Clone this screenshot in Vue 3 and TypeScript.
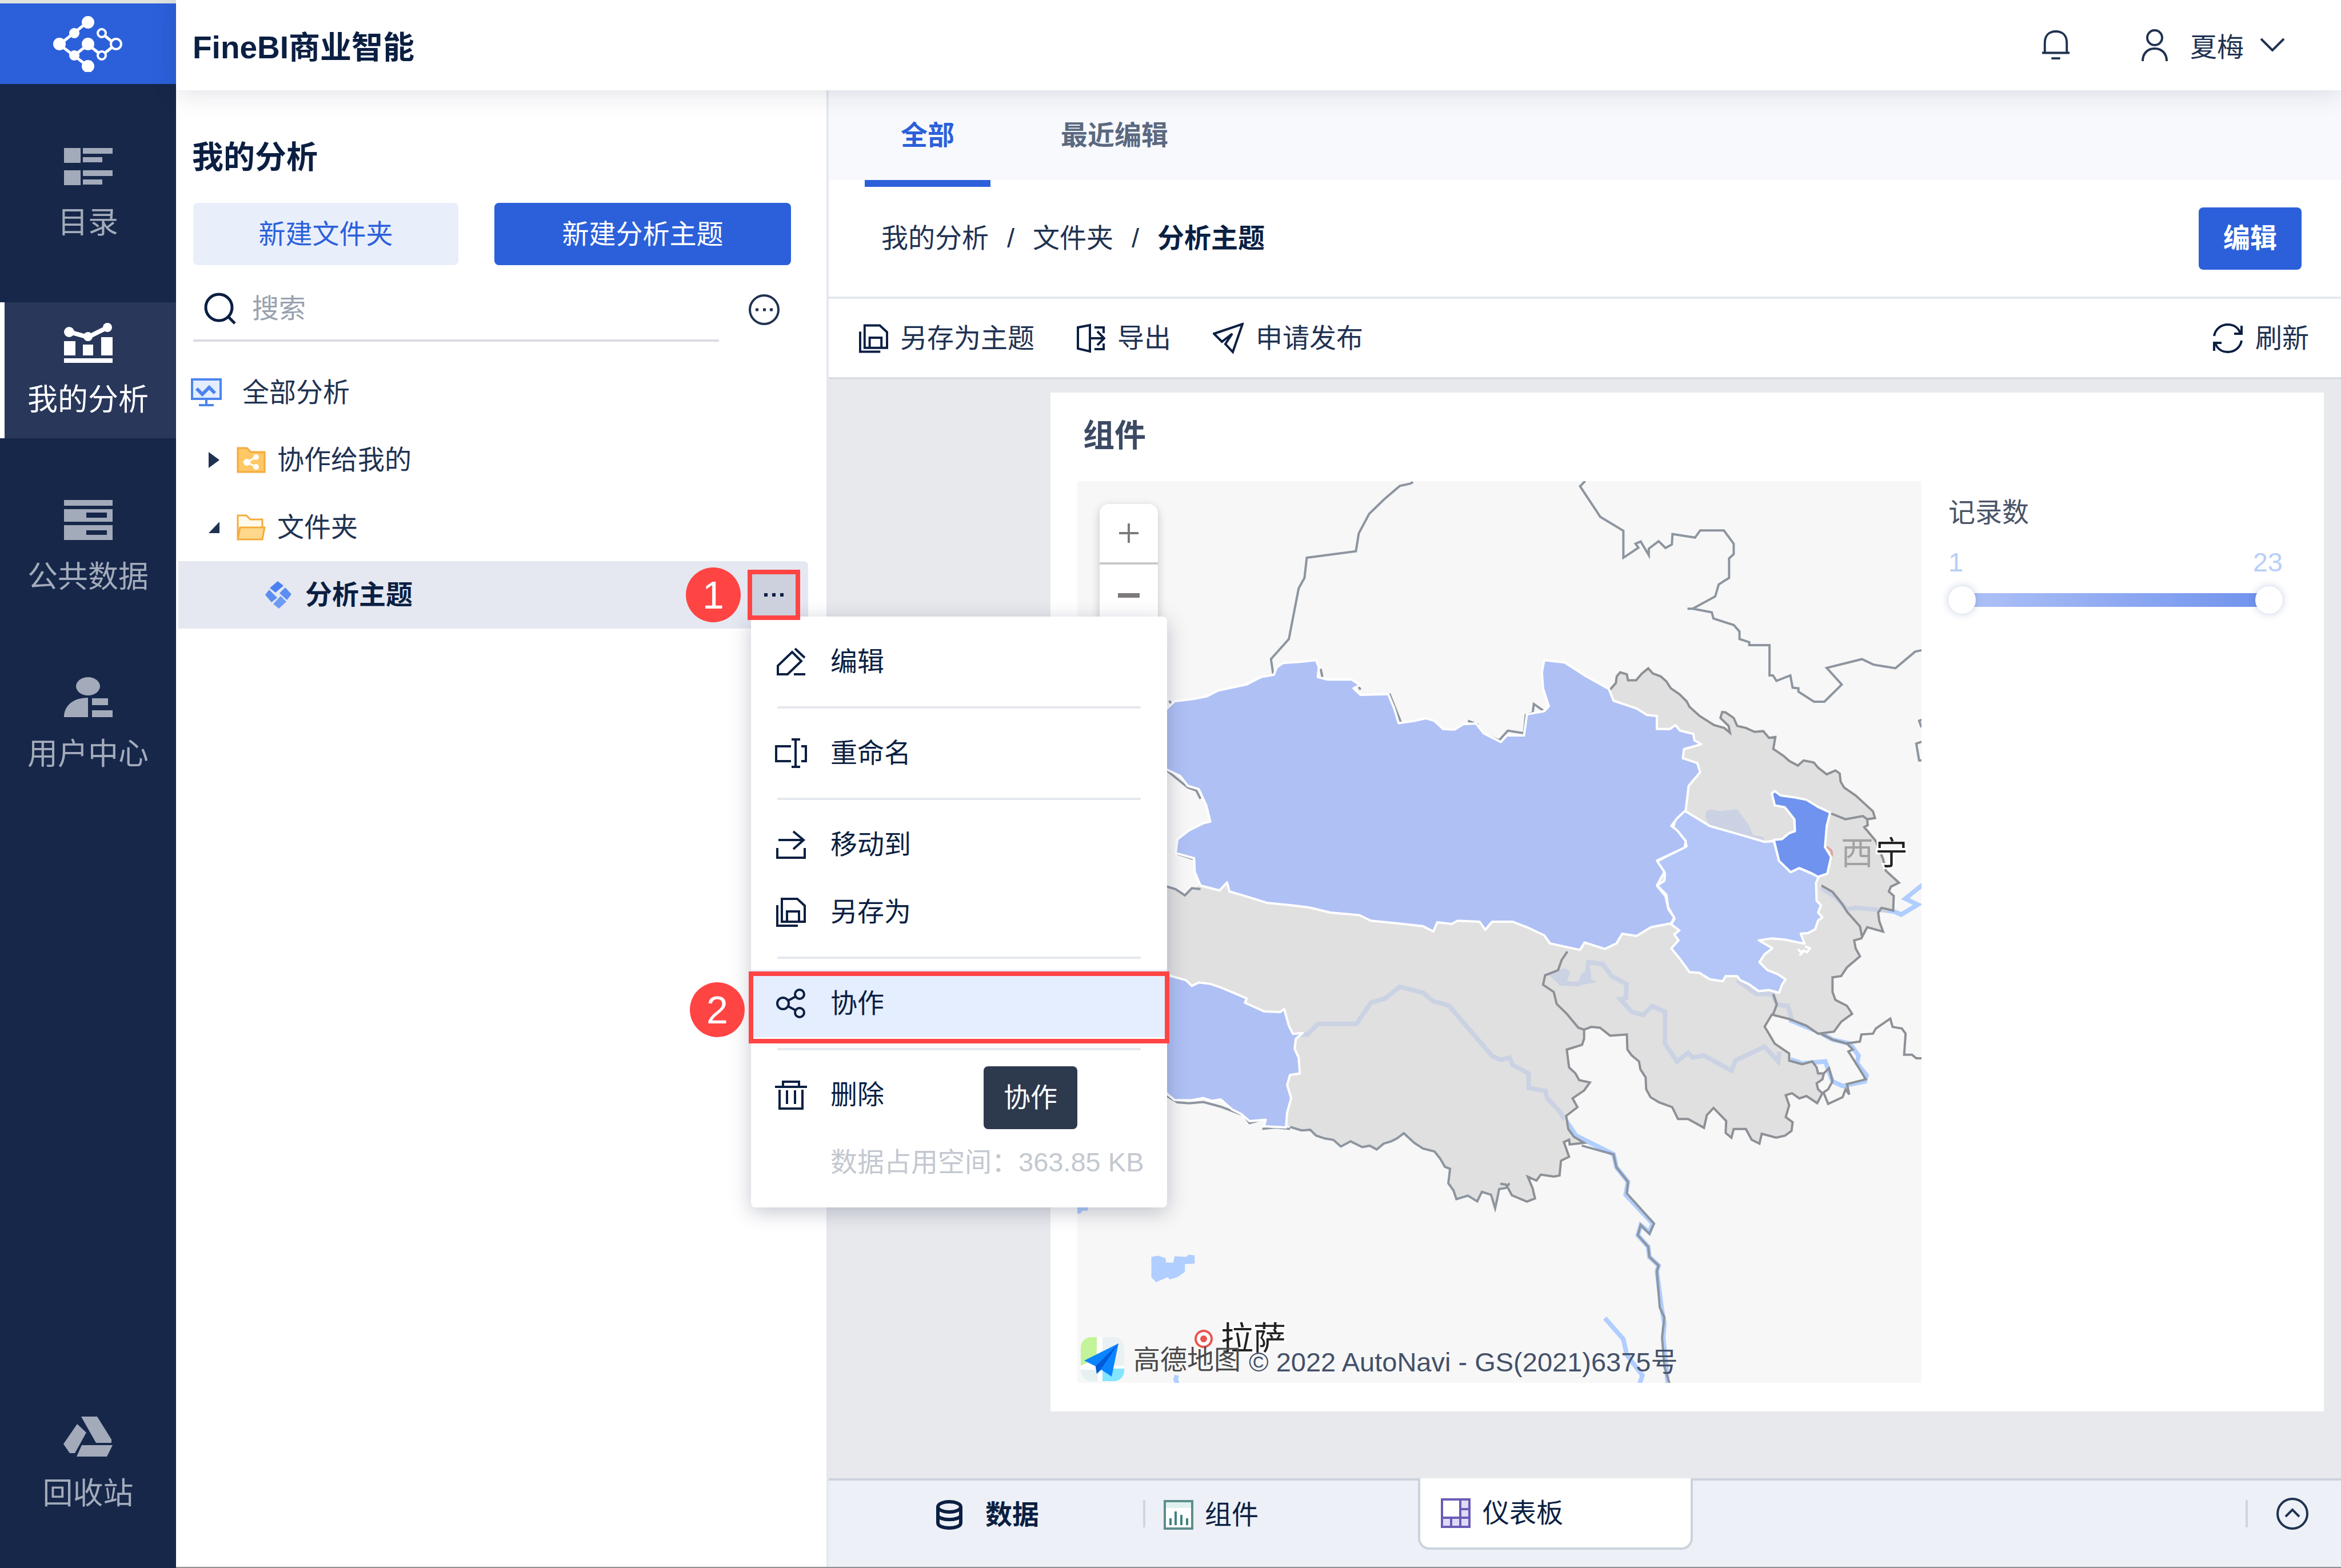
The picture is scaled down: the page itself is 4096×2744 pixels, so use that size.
<script setup lang="ts">
import { ref } from 'vue'

interface NavItem {
  id: string
  label: string
}

const navItems: NavItem[] = [
  { id: 'catalog', label: '目录' },
  { id: 'analysis', label: '我的分析' },
  { id: 'data', label: '公共数据' },
  { id: 'users', label: '用户中心' },
]

const activeNav = ref('analysis')
const activeTab = ref('all')
const keyword = ref('')
const rangeLow = ref(1)
const rangeHigh = ref(23)

/* Province rim, eastern part, clockwise from the north */
const eastRim =
  'M378 170 L400 152 L403 135 L415 125 L438 130 L442 145 L470 145 L490 128 L512 115 L528 128 L555 135 L575 148 L590 165 L620 180 L645 198 L655 212 L690 235 L740 258 L775 265 L795 277 L790 260 L762 240 L768 225 L780 226 L808 240 L820 260 L850 265 L880 275 L910 273 L930 290 L952 288 L945 318 L980 335 L1000 348 L1030 360 L1050 347 L1085 352 L1100 365 L1130 382 L1160 372 L1175 380 L1178 400 L1190 415 L1230 435 L1260 455 L1290 475 L1297 492 L1270 495 L1272 510 L1260 515 L1300 550 L1325 595 L1335 625 L1380 655 L1352 665 L1345 677 L1362 688 L1360 725 L1320 718 L1308 730 L1312 752 L1325 778 L1270 767 L1250 795 L1225 800 L1230 820 L1245 840 L1200 868 L1180 890 L1150 893 L1150 930 L1160 950 L1200 965 L1218 985 L1180 1005 L1155 1030 L1100 1035 L1060 1015 L1000 998 L940 987 L915 1017 L950 1060 L1000 1085 L1000 1103 L1045 1112 L1080 1105 L1095 1120 L1100 1135 L1120 1135 L1115 1150 L1095 1160 L1100 1175 L1115 1185 L1097 1210 L1060 1192 L1035 1198 L1010 1185 L988 1190 L1000 1215 L988 1245 L1012 1258 L1008 1280 L985 1292 L955 1297 L905 1287 L897 1312 L870 1302 L850 1275 L808 1275 L800 1297 L780 1285 L782 1255 L738 1222 L715 1240 L705 1272 L650 1250 L615 1250 L595 1220 L550 1208 L520 1195 L505 1175 L503 1145 L485 1125 L480 1105 L455 1090 L440 1075 L438 1037 L380 1040 L345 1020 L315 1018 L290 1025 L290 1048 L283 1063 L230 1075 L238 1120 L260 1135 L273 1152 L310 1158 L290 1178 L250 1198 L267 1220 L228 1242 L235 1275 L255 1295 L290 1310 L240 1314 L238 1302 L220 1308 L238 1345 L210 1355 L205 1392 L185 1395 L140 1390 L125 1405 L95 1395 L112 1425 L120 1450 L92 1458 L40 1442 L20 1415 L0 1413'

/* Province rim, south-western part, from east to west */
const westRim =
  'M800 765 L793 782 L782 785 L778 825 L775 852 L768 805 L752 795 L744 828 L728 808 L708 820 L703 790 L694 765 L697 715 L688 708 L680 680 L670 655 L650 645 L635 625 L617 592 L605 610 L595 620 L582 628 L570 648 L558 635 L545 640 L525 620 L508 638 L495 615 L480 610 L465 600 L455 580 L440 582 L420 570'

const northLines = [
  'M633 55 L628 60 L610 67 L583 108 L557 153 L539 213 L534 268 L449 288 L445 350 L435 382 L418 538 L387 600 L391 648',
  'M931 52 L922 68 L957 162 L997 205 L997 288 L1023 257 L1018 245 L1027 238 L1041 280 L1041 260 L1058 237 L1070 258 L1081 247 L1082 215 L1121 226 L1130 204 L1171 204 L1188 245 L1188 277 L1180 290 L1180 350 L1162 370 L1156 407 L1117 445 L1108 445 M1117 445 L1150 456 L1153 475 L1188 495 L1198 515 L1198 538 L1215 548 L1215 557 L1250 557 L1250 650 L1256 650 L1262 667 L1286 650 L1290 688 L1300 690 L1300 700 L1327 731 L1345 731 L1375 678 L1349 627 L1410 600 L1430 617 L1468 628 L1502 577 L1515 572',
  'M1515 786 L1509 790 L1513 810 M1515 853 L1504 860 L1509 912 L1515 912',
]

const northWest =
  'M190 775 L207 752 L220 730 L255 722 L275 715 L295 697 L345 678 L370 655 L392 648 L397 625 L408 612 L440 608 L465 603 L470 625 L468 655 L485 663 L527 663 L541 680 L530 690 L542 710 L590 708 L600 750 L608 797 L635 790 L655 782 L670 790 L685 815 L705 817 L720 800 L742 798 L755 828 L785 855 L795 835 L825 835 L830 770 L860 760 L868 745 L858 690 L856 640 L860 603 L895 610 L930 650 L972 692 L980 728 L1020 752 L1038 772 L1055 775 L1055 815 L1078 815 L1087 803 L1095 820 L1118 830 L1120 850 L1132 862 L1102 877 L1100 905 L1125 920 L1130 948 L1110 990 L1105 1065 L1090 1090 L1080 1113 L1090 1127 L1105 1160 L1103 1180 L1055 1220 L1068 1255 L1055 1297 L1070 1330 L1075 1370 L1085 1395 L1080 1413 L1045 1425 L1020 1452 L995 1445 L985 1475 L965 1492 L930 1472 L922 1495 L870 1475 L860 1450 L830 1425 L805 1408 L770 1408 L758 1433 L748 1408 L710 1405 L700 1415 L675 1410 L668 1438 L650 1422 L600 1412 L560 1405 L540 1388 L490 1380 L455 1365 L425 1358 L380 1350 L340 1328 L315 1315 L311 1287 L298 1312 L265 1297 L255 1255 L254 1213 L222 1197 L225 1155 L245 1127 L270 1105 L282 1100 L275 1050 L262 1000 L243 990 L230 960 L207 940 L190 930 Z'

const centre =
  'M635 472 L610 485 L600 512 L585 512 L610 530 L640 548 L645 563 L540 602 L570 632 L568 650 L543 662 L575 685 L580 715 L603 745 L592 760 L620 775 L602 785 L617 800 L592 820 L625 850 L655 880 L690 882 L725 898 L770 903 L780 890 L820 890 L830 900 L860 910 L895 928 L930 925 L965 932 L975 912 L987 898 L960 885 L925 875 L897 855 L915 835 L942 820 L895 800 L940 795 L985 798 L1030 805 L1053 808 L1040 783 L1065 782 L1090 772 L1100 750 L1115 742 L1100 730 L1110 712 L1095 700 L1093 655 L1102 640 L1035 618 L1005 628 L965 600 L947 550 L915 552 L850 538 L725 512 Z'

const hotspot =
  'M940 430 L950 424 L970 435 L1020 440 L1060 446 L1100 464 L1142 478 L1130 512 L1124 565 L1145 590 L1132 632 L1100 640 L1075 630 L1035 618 L1005 628 L965 600 L947 547 L975 545 L1000 530 L1020 525 L1018 495 L985 465 L950 460 Z'

const southWest =
  'M190 30 L215 48 L240 62 L250 82 L262 70 L280 74 L300 87 L325 108 L345 125 L342 140 L375 170 L403 172 L410 162 L418 220 L425 248 L442 245 L430 265 L428 300 L435 330 L437 385 L420 390 L415 425 L422 470 L415 520 L413 572 L375 568 L378 545 L350 550 L335 525 L320 510 L300 475 L285 480 L270 470 L250 478 L220 477 L207 455 L190 450 Z'
</script>

<template>
  <div class="shell">
    <aside class="sidebar">
      <div class="logo">
        <svg width="124" height="98" viewBox="0 0 124 98" fill="none" stroke="#fff" stroke-width="5">
          <path d="M62 10 L12 50 L62 88 M38 69 L62 50 L86 69 L110 50 L86 30" />
          <g fill="#fff" stroke="none">
            <circle cx="62" cy="11" r="11" /><circle cx="38" cy="30" r="9" /><circle cx="12" cy="49" r="11" />
            <circle cx="38" cy="69" r="9" /><circle cx="62" cy="88" r="11" /><circle cx="62" cy="49" r="11" />
          </g>
          <g fill="#2c60da" stroke-width="4">
            <circle cx="86" cy="30" r="7" /><circle cx="86" cy="69" r="7" /><circle cx="111" cy="49" r="9" />
          </g>
        </svg>
      </div>
      <nav class="nav">
        <a
          v-for="item in navItems"
          :key="item.id"
          href="#"
          class="nav-item"
          :class="{ active: item.id === activeNav }"
          @click.prevent="activeNav = item.id"
        >
          <svg v-if="item.id === 'catalog'" width="88" height="70" viewBox="0 0 88 70" fill="currentColor">
            <path d="M2 4h29v26H2zM35 4h52v10H35zM35 20h34v9H35zM2 43h29v26H2zM35 43h52v10H35zM35 59h34v9H35z" />
          </svg>
          <svg v-else-if="item.id === 'analysis'" width="88" height="70" viewBox="0 0 88 70" fill="currentColor">
            <path d="M2 32h20v25H2zM35 38h18v19H35zM67 25h20v32H67zM2 62h85v8H2z" />
            <path d="M12 16 L44 25 L78 8" fill="none" stroke="currentColor" stroke-width="8" />
            <circle cx="11" cy="16" r="9" /><circle cx="44" cy="24" r="8" /><circle cx="78" cy="8" r="8" />
          </svg>
          <svg v-else-if="item.id === 'data'" width="88" height="70" viewBox="0 0 88 70" fill="currentColor" fill-rule="evenodd">
            <path d="M2 0h85v10H2zM2 16h85v22H2zM41 22v9h36v-9zM2 44h85v26H2zM41 53v8h36v-8z" />
          </svg>
          <svg v-else width="88" height="70" viewBox="0 0 88 70" fill="currentColor">
            <ellipse cx="44" cy="16" rx="21" ry="16" />
            <path d="M2 70 C2 50 18 36 44 36 V70zM51 37h28v12H51zM51 58h36v12H51z" />
          </svg>
          <span>{{ item.label }}</span>
        </a>
      </nav>
      <a href="#" class="nav-item recycle">
        <svg width="88" height="70" viewBox="0 0 88 70" fill="currentColor">
          <path d="M32 0H60L85 40V46H58zM25 13 L41 28 L21 64 H12 L1 48zM33 50H87L77 70H24z" />
        </svg>
        <span>回收站</span>
      </a>
    </aside>

    <div class="page">
      <header class="header">
        <h1>FineBI商业智能</h1>
        <div class="account">
          <button class="plain bell" aria-label="通知">
            <svg width="50" height="56" viewBox="0 0 52 56" fill="none" stroke="#1f3251" stroke-width="4">
              <path d="M1 42H51M6 42V24C6 10 14 3 26 3S46 10 46 24V42M18 52H34" />
            </svg>
          </button>
          <button class="plain user">
            <svg width="46" height="56" viewBox="0 0 46 56" fill="none" stroke="#1f3251" stroke-width="4">
              <circle cx="23" cy="15" r="13" /><path d="M2 56C2 42 11 34 23 34S44 42 44 56" />
            </svg>
            <span>夏梅</span>
            <svg width="44" height="28" viewBox="0 0 44 28" fill="none" stroke="#1f3251" stroke-width="4">
              <path d="M2 3 L22 23 L42 3" />
            </svg>
          </button>
        </div>
      </header>

      <div class="workspace">
        <section class="panel">
          <h2>我的分析</h2>
          <div class="create">
            <button class="btn soft">新建文件夹</button>
            <button class="btn primary">新建分析主题</button>
          </div>
          <div class="search-row">
            <label class="search">
              <svg width="56" height="56" viewBox="0 0 56 56" fill="none" stroke="#0b1f42" stroke-width="5">
                <circle cx="26" cy="26" r="23" /><path d="M42 42 L54 54" />
              </svg>
              <input v-model="keyword" type="text" placeholder="搜索" aria-label="搜索" />
            </label>
            <button class="plain" aria-label="更多">
              <svg width="54" height="54" viewBox="0 0 54 54" fill="none" stroke="#1f3251" stroke-width="4">
                <circle cx="27" cy="27" r="25" />
                <path d="M12 27h5M25 27h5M37 27h5" stroke-width="5" />
              </svg>
            </button>
          </div>

          <ul class="tree">
            <li class="row level-0">
              <svg width="54" height="50" viewBox="0 0 54 50" fill="none" stroke="#4c84ee" stroke-width="4">
                <rect x="2" y="2" width="50" height="34" fill="#e4edff" />
                <path d="M10 18 L20 28 L32 16 L42 26" stroke-width="6" /><path d="M27 38V46M14 47H40" />
              </svg>
              <span>全部分析</span>
            </li>
            <li class="row level-1">
              <svg width="19" height="28" viewBox="0 0 19 28"><path d="M0 0 L19 14 L0 28z" fill="#1f3251" /></svg>
              <svg width="51" height="46" viewBox="0 0 51 46">
                <path d="M2 2H18L25 9H49V44H2z" fill="#ffc766" stroke="#f2ab3c" stroke-width="3" />
                <path d="M34 18 L18 27 L34 35" fill="none" stroke="#fff" stroke-width="3" />
                <circle cx="18" cy="27" r="6" fill="#fff" /><circle cx="34" cy="18" r="5" fill="#fff" /><circle cx="34" cy="35" r="5" fill="#fff" />
              </svg>
              <span>协作给我的</span>
            </li>
            <li class="row level-1">
              <svg width="19" height="20" viewBox="0 0 19 20"><path d="M19 0V20H0z" fill="#1f3251" /></svg>
              <svg width="51" height="46" viewBox="0 0 51 46" stroke="#f2ab3c" stroke-width="3">
                <path d="M2 42V2H17L24 9H45V24" fill="#fffaea" /><path d="M6 23H49L45 44H2z" fill="#ffd88c" />
              </svg>
              <span>文件夹</span>
            </li>
            <li class="row level-2 selected">
              <svg width="48" height="50" viewBox="0 0 48 50" fill="#5b8df2">
                <path d="M23 1 L33 9 L19 21 L9 13z" fill="#4a80f2" /><path d="M36 12 L47 24 L39 34 L26 22z" />
                <path d="M8 16 L22 30 L12 38 L1 25z" /><path d="M28 27 L38 37 L25 49 L15 41z" fill="#6d9af4" />
              </svg>
              <strong>分析主题</strong>
              <span class="badge in-row">1</span>
              <button class="row-more" aria-label="更多操作">
                <svg width="34" height="6" viewBox="0 0 34 6" fill="#0b1f42"><path d="M0 0h6v6H0zM14 0h6v6h-6zM28 0h6v6h-6z" /></svg>
              </button>

              <div class="menu">
                <button class="menu-item">
                  <svg width="52" height="52" viewBox="0 0 52 52" class="line">
                    <path d="M3 48V33L28 9L44 25L20 48zM33 3L50 19M31 48H51" />
                  </svg>
                  <span>编辑</span>
                </button>
                <hr />
                <button class="menu-item">
                  <svg width="56" height="52" viewBox="0 0 56 52" class="line wide">
                    <path d="M28 14H2V40H28M46 14H54V40H46M36 2V50M29 2H44M29 50H44" />
                  </svg>
                  <span>重命名</span>
                </button>
                <hr />
                <button class="menu-item">
                  <svg width="52" height="52" viewBox="0 0 52 52" class="line">
                    <path d="M4 18H48M30 3L48 18L30 34M2 32V49H50V32" />
                  </svg>
                  <span>移动到</span>
                </button>
                <button class="menu-item">
                  <svg width="52" height="52" viewBox="0 0 52 52" class="line">
                    <path d="M10 3H37L50 15V43H10zM2 14V50H38M19 43V25H40V43" />
                  </svg>
                  <span>另存为</span>
                </button>
                <hr />
                <div class="hover-wrap">
                  <button class="menu-item hovered">
                    <svg width="52" height="52" viewBox="0 0 52 52" class="line">
                      <circle cx="12" cy="26" r="10" /><circle cx="41" cy="10" r="8" /><circle cx="41" cy="42" r="8" />
                      <path d="M21 21L34 14M21 31L34 38" />
                    </svg>
                    <span>协作</span>
                  </button>
                  <div class="outline"></div>
                  <span class="badge beside">2</span>
                  <div class="tooltip" role="tooltip">协作</div>
                </div>
                <hr />
                <button class="menu-item">
                  <svg width="56" height="52" viewBox="0 0 56 52" class="line wide">
                    <path d="M0 12H56M14 11V3H42V11M8 17V50H48V17M21 18V42M35 18V42" />
                  </svg>
                  <span>删除</span>
                </button>
                <p class="usage">数据占用空间：363.85 KB</p>
              </div>
            </li>
          </ul>
        </section>

        <main class="main">
          <div class="tabs" role="tablist">
            <button role="tab" class="tab" :class="{ on: activeTab === 'all' }" @click="activeTab = 'all'">全部</button>
            <button role="tab" class="tab" :class="{ on: activeTab === 'recent' }" @click="activeTab = 'recent'">最近编辑</button>
          </div>

          <div class="crumbs">
            <a href="#">我的分析</a><i>/</i><a href="#">文件夹</a><i>/</i><strong>分析主题</strong>
            <button class="btn primary edit">编辑</button>
          </div>

          <div class="toolbar">
            <button class="plain tool">
              <svg width="51" height="52" viewBox="0 0 52 52" class="line">
                <path d="M10 3H37L50 15V43H10zM2 14V50H38M19 43V25H40V43" />
              </svg>
              <span>另存为主题</span>
            </button>
            <button class="plain tool">
              <svg width="51" height="52" viewBox="0 0 51 52" class="line">
                <path d="M24 3L3 7V44L24 49zM32 7H48V17M32 45H48V35M26 26H49M37 14L49 26L37 38" />
              </svg>
              <span>导出</span>
            </button>
            <button class="plain tool">
              <svg width="54" height="56" viewBox="0 0 54 56" class="line">
                <path d="M2 20L52 3L35 52L22 38L34 20L16 34z" />
              </svg>
              <span>申请发布</span>
            </button>
            <button class="plain tool refresh">
              <svg width="54" height="52" viewBox="0 0 54 52" class="line">
                <path d="M3 22C5 10 15 2 27 2C38 2 46 8 49 18M51 4V18H38M51 30C49 42 39 50 27 50C16 50 8 44 5 34M3 48V34H16" />
              </svg>
              <span>刷新</span>
            </button>
          </div>

          <div class="canvas">
            <article class="card">
              <h3>组件</h3>
              <div class="card-body">
                <div class="map">
                  <svg viewBox="0 0 1477 1578" fill="none" class="map-art" role="img" aria-label="地图">
                    <rect width="1477" height="1578" fill="#f7f7f7" />
                    <!-- open water outside the province -->
                    <g transform="matrix(1.0108 0 0 .5054 -52.4 842)" fill="#b0ceff">
                      <path d="M180 1020 L192 1016 L205 1025 L205 1040 L218 1040 L220 1018 L240 1020 L245 1012 L255 1015 L255 1043 L238 1045 L238 1072 L225 1090 L212 1098 L208 1090 L188 1108 L180 1090zM50 845H70V860H61L57 870H50z" />
                      <g fill="none" stroke="#b0ceff" class="river">
                        <path d="M895 540 L915 600 L980 665 L985 710 L1005 760 L1001 805 L1048 905 L1042 935 L1027 910 L1022 945 L1040 985 L1042 1020 L1058 1050 L1055 1070 L1063 1195 L1068 1250 L1066 1300 L1074 1460" />
                        <path d="M965 1232 L997 1305 L1003 1360 L1030 1430 L1025 1460M224 1430L222 1445L225 1460" />
                      </g>
                    </g>
                    <g transform="matrix(.5054 0 0 .6949 740.1 247.7)" class="river" stroke="#b0ceff">
                      <path d="M1340 725 L1365 728 L1388 735 L1445 710 L1402 695 L1462 660M1000 1000 L1100 1030 L1150 1050 L1210 1060 L1240 1090 L1235 1110 L1268 1140 L1262 1155 L1185 1167 L1150 1155 L1125 1105 L1045 1110 L1005 1100" />
                    </g>
                    <!-- district without records -->
                    <g fill="#e0e0e0">
                      <path transform="matrix(1.0108 0 0 .5054 -52.4 842)" :d="westRim + ' L380 500 L190 430 L190 -262 L207 -262 L222 -253 L240 -232 L250 -256 L262 -262 L262 -300 L800 -250 Z'" />
                      <path transform="matrix(.5054 0 0 .6949 740.1 247.7)" :d="eastRim + ' L-5 1413 L-5 700 L300 300 Z'" />
                    </g>
                    <!-- rivers and lakes inside the province -->
                    <g transform="matrix(1.0108 0 0 .5054 -52.4 842)" class="river" stroke="#cad2e3">
                      <path d="M425 252 L450 250 L468 213 L535 213 L560 140 L585 125 L610 85 L650 105 L668 135 L695 150 L770 325 L785 338 L800 330 L805 355 L833 385 L833 435 L862 445 L865 470 L888 520 L895 545" />
                    </g>
                    <g transform="matrix(.5054 0 0 .6949 740.1 247.7)">
                      <path d="M712 475 L730 470 L760 475 L820 470 L860 510 L875 535 L912 540 L912 550 L725 512 L710 490zM165 885 L225 870 L242 880 L230 905 L205 912zM265 915 L280 885 L312 870 L315 898 L335 905z" fill="#cad2e3" />
                      <g class="river" stroke="#cad2e3">
                        <path d="M205 908 L270 910 L300 885 L305 855 L355 860 L385 890 L437 910 L435 945 L415 948 L455 980 L495 988 L525 965 L570 980 L570 1060 L612 1105 L650 1083 L665 1095 L705 1090 L800 1128 L815 1102 L915 1068 L962 1105 L966 1080M1110 668 L1160 690 L1200 722 L1230 718 L1340 725M820 900 L885 935 L940 935 L960 962 L995 965 L1010 1000" />
                      </g>
                      <path d="M1128 565 C1148 570 1150 580 1146 590" stroke="#dfa3a3" class="edge" />
                    </g>
                    <!-- borders -->
                    <g transform="matrix(1.0108 0 0 .5686 -52.4 -29.7)" stroke="#8d959f" class="edge">
                      <path v-for="d in northLines" :key="d" :d="d" />
                      <path d="M190 1290 L207 1300 L222 1308 L238 1327 L250 1305 L265 1308M211 728 L216 742M473 630 L476 655M592 706 L612 795M538 684 L542 694M728 790 L746 802M757 832 L782 850 L797 820 L825 828 L828 772 L840 765 L842 738 L858 758M207 943 L243 995 L258 1005 L265 1030M226 1200 L252 1215" />
                    </g>
                    <g transform="matrix(1.0108 0 0 .5054 -52.4 842)" stroke="#8d959f" class="edge">
                      <path :d="westRim" />
                      <path d="M207 463 L225 485 L245 488 L270 484 L300 500 L340 530 L350 557 L370 545M372 577 L395 572 L420 577M925 635 L980 665 L985 710 L1005 760 L1003 800 L1050 905 L1042 940 L1027 910 L1022 945 L1040 985 L1042 1020 L1058 1050 L1055 1070 L1060 1195 L1068 1230 L1064 1300 L1068 1400 L1077 1460" />
                    </g>
                    <g transform="matrix(.5054 0 0 .6949 740.1 247.7)" stroke="#8d9196" class="edge">
                      <path :d="eastRim" />
                      <path d="M232 828 L212 850 L200 875 L155 888 L148 912 L185 930 L195 960 L230 985 L270 1020 L290 1025M945 935 L957 962 L945 985M1112 662 L1150 678 L1185 710 L1200 728 L1245 765 L1252 790M1143 480 L1195 495 L1255 487 L1270 495" />
                      <path d="M1110 1035 L1150 1050 L1200 1060 L1220 1075 L1205 1080 L1240 1120 L1265 1150 L1200 1162 L1208 1188 L1195 1175 L1185 1195 L1135 1212 L1120 1185M1120 1135 L1138 1122 L1150 1155 L1135 1175 L1115 1185M1195 1060 L1245 1055 L1250 1037 L1290 1035 L1300 1022 L1350 997 L1358 1018 L1390 1022 L1403 1035 L1398 1088 L1425 1088 L1440 1097 L1462 1097" />
                    </g>
                    <!-- districts with records -->
                    <g stroke="#fff" class="district">
                      <path transform="matrix(.5054 0 0 .6949 740.1 247.7)" :d="centre" fill="#b4c6f7" />
                      <path transform="matrix(1.0108 0 0 .5686 -52.4 -29.7)" :d="northWest" fill="#afc0f5" />
                      <path transform="matrix(1.0108 0 0 .5054 -52.4 842)" :d="southWest" fill="#afc0f5" />
                      <path transform="matrix(.5054 0 0 .6949 740.1 247.7)" :d="hotspot" fill="#6f93ee" />
                      <path transform="matrix(.5054 0 0 .6949 740.1 247.7)" d="M1030 822 L1045 832 L1038 836 L1050 826 L1062 830 L1072 820 L1055 815" />
                    </g>
                    <text x="1336" y="671" class="city faded">西</text>
                    <text x="1396" y="671" class="city">宁</text>
                    <circle cx="221" cy="1501" r="14" fill="#fff" stroke="#e9544f" stroke-width="4" />
                    <circle cx="221" cy="1501" r="6" fill="#e9544f" />
                    <text x="251" y="1520" class="city">拉萨</text>
                    <!-- map provider mark -->
                    <clipPath id="mark"><rect x="6" y="1498" width="76" height="77" rx="18" /></clipPath>
                    <g clip-path="url(#mark)">
                      <path d="M6 1498H82V1575H6z" fill="#fff" /><path d="M6 1498H34V1535L6 1548z" fill="#c3f49a" />
                      <path d="M44 1498H82V1548H44z" fill="#e9f1f2" /><path d="M6 1555H36V1575H6z" fill="#e6f0f1" /><path d="M44 1553H82V1575H44z" fill="#82e6ff" />
                    </g>
                    <path d="M72 1509L12 1539L32 1549L34 1562L42 1555L60 1567z" fill="#0a84ff" /><path d="M72 1509L32 1549L34 1562L42 1553z" fill="#0059d6" />
                    <text x="98" y="1554" class="provider">高德地图</text>
                    <text x="300" y="1558" class="copyright">© 2022 AutoNavi - GS(2021)6375号</text>
                  </svg>
                  <div class="zoom">
                    <button aria-label="放大"><svg width="34" height="34" viewBox="0 0 34 34"><path d="M17 0V34M0 17H34" stroke="#7d7a7a" stroke-width="4" /></svg></button>
                    <button aria-label="缩小"><svg width="38" height="8" viewBox="0 0 38 8"><path d="M0 4H38" stroke="#7d7a7a" stroke-width="8" /></svg></button>
                  </div>
                </div>

                <div class="legend">
                  <p class="legend-name">记录数</p>
                  <div class="legend-ends"><span>{{ rangeLow }}</span><span>{{ rangeHigh }}</span></div>
                  <div class="slider">
                    <div class="track"></div>
                    <input v-model.number="rangeLow" type="range" min="1" max="23" aria-label="最小值" />
                    <input v-model.number="rangeHigh" type="range" min="1" max="23" aria-label="最大值" />
                  </div>
                </div>
              </div>
            </article>
          </div>

          <footer class="dock">
            <button class="plain dock-item data">
              <svg width="48" height="52" viewBox="0 0 48 52" fill="none" stroke="#0b1f42" stroke-width="6">
                <ellipse cx="24" cy="12" rx="20" ry="9" /><path d="M4 12V40C4 52 44 52 44 40V12M4 26C4 37 44 37 44 26" />
              </svg>
              <strong>数据</strong>
            </button>
            <span class="sep"></span>
            <button class="plain dock-item parts">
              <svg width="52" height="52" viewBox="0 0 52 52">
                <rect x="2" y="2" width="48" height="48" fill="#fff" stroke="#5d8d8c" stroke-width="4" /><path d="M4 4H48V14H4z" fill="#dff2f0" />
                <path d="M12 44V32M21 44V20M31 44V26M41 44V32" stroke="#3f827f" stroke-width="4" />
              </svg>
              <span>组件</span>
            </button>
            <button class="plain dock-item board">
              <svg width="52" height="52" viewBox="0 0 52 52" stroke="#6a5bb5" stroke-width="4">
                <rect x="2" y="2" width="48" height="48" fill="#dedaf8" /><path d="M2 2H34V34H2z" fill="#fff" /><path d="M34 19H50M34 34H50M34 34V50M18 34V50" />
              </svg>
              <span>仪表板</span>
            </button>
            <div class="dock-end">
              <span class="sep"></span>
              <button class="plain" aria-label="展开">
                <svg width="56" height="56" viewBox="0 0 56 56" fill="none" stroke="#1f3251" stroke-width="4">
                  <circle cx="28" cy="28" r="26" /><path d="M16 33L28 21L40 33" />
                </svg>
              </button>
            </div>
          </footer>
        </main>
      </div>
    </div>
  </div>
</template>

<style>
body {
  margin: 0;
}
</style>

<style scoped>
.shell {
  display: flex;
  min-height: 100vh;
  background: #fff;
  color: #1f3251;
  font-family: "Liberation Sans", "Noto Sans CJK SC", sans-serif;
  font-size: 47px;
  line-height: 60px;
}
.shell *,
.shell *::before {
  box-sizing: border-box;
}
svg {
  display: block;
  flex: none;
}
h1, h2, h3, p, ul {
  margin: 0;
  padding: 0;
  font-weight: 400;
}
button {
  font: inherit;
  color: inherit;
  border: 0;
  padding: 0;
  cursor: pointer;
}
.plain {
  display: flex;
  align-items: center;
  background: none;
}
.line {
  fill: none;
  stroke: #0b1f42;
  stroke-width: 4;
}

/* Sidebar */
.sidebar {
  display: flex;
  flex-direction: column;
  flex: none;
  width: 308px;
  background: #16274a;
}
.logo {
  display: flex;
  align-items: center;
  justify-content: center;
  height: 147px;
  border-top: 6px solid #e0e2df;
  background: #2c60da;
}
.nav {
  display: flex;
  flex-direction: column;
  gap: 72px;
  padding-top: 72px;
}
.nav-item {
  display: flex;
  flex-direction: column;
  align-items: center;
  gap: 35px;
  height: 238px;
  padding-top: 36px;
  color: #a3abba;
  font-size: 53px;
  text-decoration: none;
}
.nav-item.active {
  background: #28375a;
  box-shadow: inset 8px 0 #fff;
  color: #fff;
}
.recycle {
  margin: auto 0 63px;
}

/* Header */
.page {
  display: flex;
  flex-direction: column;
  flex: 1;
  min-width: 0;
  border-bottom: 2px solid #8f9093;
}
.header {
  position: relative;
  z-index: 2;
  display: flex;
  align-items: center;
  justify-content: space-between;
  height: 158px;
  padding: 8px 98px 0 29px;
  background: #fff;
  box-shadow: 0 4px 44px rgba(20, 30, 60, 0.14);
}
.header h1,
.panel h2,
.card h3 {
  font-size: 55px;
  font-weight: 700;
  color: #0b1f42;
}
.account {
  display: flex;
}
.account svg {
  margin-bottom: 8px;
}
.user {
  margin-left: 125px;
}
.user span {
  margin: 0 28px 0 39px;
}

/* Left panel */
.workspace {
  display: flex;
  flex: 1;
}
.panel {
  position: relative;
  z-index: 1;
  flex: none;
  width: 1142px;
  border-right: 4px solid #e5e8ef;
  background: #fff;
}
.panel h2 {
  padding: 77px 28px 0;
  line-height: 80px;
}
.create {
  display: flex;
  gap: 63px;
  padding: 40px 0 0 30px;
}
.btn {
  height: 109px;
  border-radius: 8px;
}
.soft {
  width: 464px;
  background: #e8effb;
  color: #2c60da;
}
.primary {
  width: 519px;
  background: #2c60da;
  color: #fff;
}
.search-row {
  display: flex;
  align-items: center;
  padding-left: 30px;
}
.search {
  display: flex;
  align-items: center;
  gap: 28px;
  width: 920px;
  height: 134px;
  padding: 22px 20px 0 19px;
  border-bottom: 4px solid #d9dce5;
}
.search input {
  flex: 1;
  min-width: 0;
  border: 0;
  padding: 0;
  outline: 0;
  background: none;
  color: #1f3251;
  font: inherit;
}
.search input::placeholder {
  color: #98a1ae;
  opacity: 1;
}
.search-row > .plain {
  margin: 22px 0 0 52px;
}
.tree {
  padding-top: 30px;
  list-style: none;
}
.row {
  position: relative;
  display: flex;
  align-items: center;
  width: 1102px;
  height: 118px;
  margin-left: 4px;
}
.level-0 {
  gap: 36px;
  padding-left: 22px;
}
.level-1 {
  gap: 20px;
  padding-left: 53px;
}
.level-1 svg:first-child {
  margin-right: 10px;
}
.level-2 {
  gap: 23px;
  padding-left: 151px;
}
.selected {
  border-radius: 0 8px 8px 0;
  background: #e5e8f1;
  color: #0b1f42;
}
.badge {
  display: flex;
  align-items: center;
  justify-content: center;
  width: 96px;
  height: 96px;
  border-radius: 50%;
  background: #ff4444;
  color: #fff;
  font-size: 68px;
}
.in-row {
  margin-left: auto;
  margin-right: -11px;
}
.row-more {
  position: relative;
  z-index: 2;
  display: flex;
  align-items: center;
  justify-content: center;
  width: 92px;
  height: 88px;
  margin-right: 14px;
  border: 8px solid #ff4444;
  background: #ccd1dd;
}

/* Row menu */
.menu {
  position: absolute;
  z-index: 1;
  left: 1002px;
  top: 97px;
  width: 728px;
  padding: 20px 0;
  border-radius: 8px;
  background: #fff;
  box-shadow: 0 8px 36px rgba(30, 40, 70, 0.26);
}
.menu-item {
  display: flex;
  align-items: center;
  gap: 43px;
  width: 100%;
  height: 118px;
  padding-left: 44px;
  background: none;
}
.menu-item .wide {
  margin: 0 -2px;
}
.menu hr {
  height: 4px;
  margin: 19px 46px;
  border: 0;
  background: #e5e8ef;
}
.hover-wrap {
  position: relative;
}
.hovered {
  background: #e5eefe;
}
.outline {
  position: absolute;
  inset: 3px -4px -11px;
  border: 8px solid #ff4444;
  pointer-events: none;
}
.beside {
  position: absolute;
  left: -107px;
  top: 22px;
}
.tooltip {
  position: absolute;
  z-index: 1;
  left: 407px;
  top: 169px;
  padding: 25px 35px;
  border-radius: 8px;
  background: #2d394d;
  color: #fff;
}
.usage {
  padding-left: 139px;
  line-height: 118px;
  color: #c3c8d0;
}

/* Main area */
.main {
  display: flex;
  flex-direction: column;
  flex: 1;
  min-width: 0;
}
.tabs {
  display: flex;
  gap: 60px;
  height: 157px;
  padding-left: 63px;
  background: #f7f9fd;
}
.tab {
  position: relative;
  padding: 0 63px;
  background: none;
  color: #5b6980;
  font-weight: 700;
}
.tab.on {
  color: #2c60da;
}
.tab.on::after {
  content: "";
  position: absolute;
  left: 0;
  right: 0;
  top: 157px;
  height: 12px;
  background: #2c60da;
}
.crumbs {
  display: flex;
  align-items: center;
  height: 208px;
  padding: 0 69px 0 92px;
  border-bottom: 4px solid #e5e8ef;
}
.crumbs a {
  color: #1f3251;
  text-decoration: none;
}
.crumbs i {
  width: 77px;
  font-style: normal;
  text-align: center;
}
.crumbs strong {
  color: #0b1f42;
}
.edit {
  width: 180px;
  margin-left: auto;
  font-weight: 700;
}
.toolbar {
  display: flex;
  align-items: center;
  gap: 73px;
  height: 141px;
  padding: 0 56px 0 53px;
  border-bottom: 4px solid #d9dce4;
}
.tool {
  gap: 21px;
}
.refresh {
  margin-left: auto;
}
.canvas {
  flex: 1;
  padding: 23px 30px 117px 388px;
  background: #e8e9ed;
}
.card {
  padding: 0 0 50px 47px;
  background: #fff;
}
.card h3 {
  padding: 0 10px 5px;
  line-height: 150px;
  color: #3c4a63;
}
.card-body {
  display: flex;
}
.map {
  position: relative;
  flex: 1;
  min-width: 0;
}
.map-art {
  width: 100%;
  height: auto;
}
.map-art path {
  vector-effect: non-scaling-stroke;
}
.river {
  stroke-width: 8px;
}
.edge {
  stroke-width: 4px;
}
.district {
  stroke-width: 4px;
  stroke-linejoin: round;
}
.city {
  fill: #222;
  stroke: #fff;
  stroke-width: 6px;
  paint-order: stroke;
  font-size: 57px;
}
.faded {
  fill: #a2a2a2;
  stroke: none;
}
.provider {
  fill: #4a4a4a;
  font-size: 47px;
}
.copyright {
  fill: #44516a;
  font-size: 47px;
}
.zoom {
  position: absolute;
  left: 39px;
  top: 40px;
  width: 102px;
  border-radius: 16px;
  background: #fff;
  box-shadow: 0 4px 16px rgba(0, 0, 0, 0.2);
}
.zoom button {
  display: flex;
  align-items: center;
  justify-content: center;
  width: 100%;
  height: 102px;
  background: none;
}
.zoom button + button {
  height: 112px;
  border-top: 4px solid #c9c9c9;
}

/* Legend */
.legend {
  flex: none;
  width: 704px;
  padding: 25px 72px 0 47px;
  color: #4a5468;
}
.legend-ends {
  display: flex;
  justify-content: space-between;
  padding-top: 27px;
  color: #b7cff6;
}
.slider {
  position: relative;
  height: 48px;
  margin-top: 12px;
}
.track {
  position: absolute;
  inset: 12px 24px;
  background: linear-gradient(90deg, #b0c2f6, #6f92ed);
}
.slider input {
  position: absolute;
  inset: 0;
  width: 100%;
  height: 48px;
  margin: 0;
  appearance: none;
  background: none;
  pointer-events: none;
}
.slider input::-webkit-slider-thumb {
  appearance: none;
  width: 48px;
  height: 48px;
  border-radius: 50%;
  background: #fff;
  box-shadow: 0 0 14px rgba(60, 90, 160, 0.3);
  pointer-events: auto;
}

/* Bottom dock */
.dock {
  display: flex;
  height: 155px;
  border-top: 4px solid #ccd3dc;
  background: #edf0f6;
}
.dock-item {
  height: 119px;
  color: #0b1f42;
}
.data {
  gap: 39px;
  width: 550px;
  padding-left: 187px;
}
.parts {
  gap: 20px;
  width: 477px;
  padding-left: 32px;
}
.board {
  gap: 21px;
  width: 481px;
  height: 125px;
  margin-top: -4px;
  padding-left: 36px;
  border: 4px solid #ccd3dc;
  border-top: 0;
  border-radius: 0 0 20px 20px;
  background: #fff;
}
.sep {
  width: 4px;
  height: 48px;
  margin-top: 34px;
  background: #d0d5de;
}
.dock-end {
  display: flex;
  gap: 50px;
  height: 116px;
  margin-left: auto;
  padding-right: 57px;
}
</style>
